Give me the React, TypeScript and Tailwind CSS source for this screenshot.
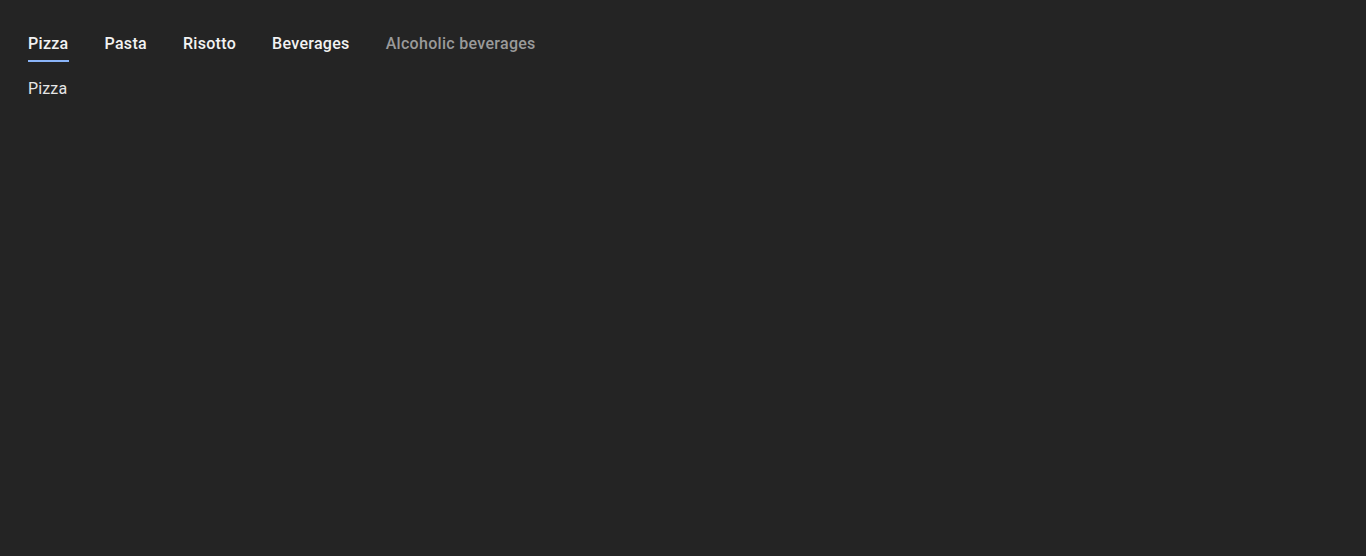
import * as React from "react";

const TABS = [
  { label: "Pizza", active: true },
  { label: "Pasta" },
  { label: "Risotto" },
  { label: "Beverages" },
  { label: "Alcoholic beverages", disabled: true },
];

export default function App() {
  return (
    <div className="min-h-[556px] w-full bg-[#242424] px-7 pt-[32px] font-['Roboto',sans-serif]">
      <div className="flex gap-9">
        {TABS.map((t) => (
          <div key={t.label} className="flex flex-col">
            <span
              className={
                "pb-[4px] text-base leading-6 font-medium tracking-[0.3px] " +
                (t.disabled ? "text-[#9a9a9a]" : "text-[#f2f2f2]")
              }
            >
              {t.label}
            </span>
            <span className={"h-0.5 " + (t.active ? "bg-[#8ab4f8]" : "bg-transparent")} />
          </div>
        ))}
      </div>
      <p className="mt-[15px] text-base leading-6 tracking-[0.15px] text-[#e6e6e6]">Pizza</p>
    </div>
  );
}
